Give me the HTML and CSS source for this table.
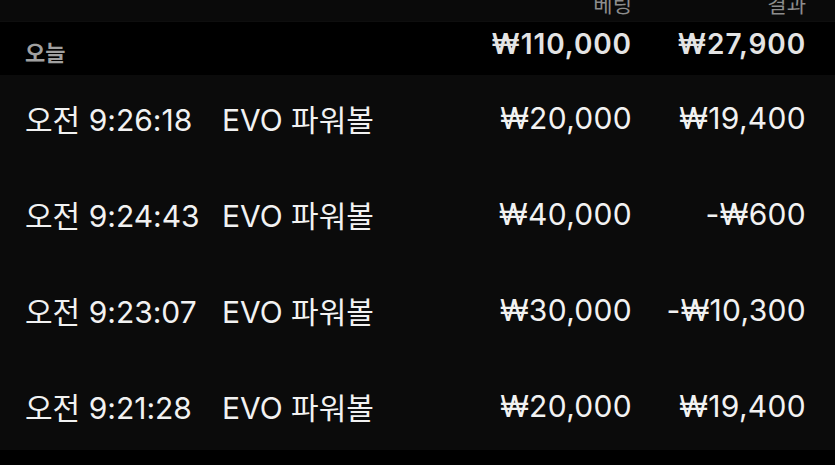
FILE: index.html
```html
<!DOCTYPE html>
<html lang="ko">
<head>
<meta charset="utf-8">
<link rel="stylesheet" href="styles.css">
</head>
<body>
<div class="table">
  <div class="row head">
    <div></div><div></div>
    <div class="num">베팅</div>
    <div class="num">결과</div>
  </div>
  <div class="row summary">
    <div class="label">오늘</div><div></div>
    <div class="num">₩110,000</div>
    <div class="num">₩27,900</div>
  </div>
  <div class="rows">
    <div class="row item">
      <div class="txt">오전 9:26:18</div><div class="txt">EVO 파워볼</div>
      <div class="num">₩20,000</div><div class="num">₩19,400</div>
    </div>
    <div class="row item">
      <div class="txt">오전 9:24:43</div><div class="txt">EVO 파워볼</div>
      <div class="num">₩40,000</div><div class="num">-₩600</div>
    </div>
    <div class="row item">
      <div class="txt">오전 9:23:07</div><div class="txt">EVO 파워볼</div>
      <div class="num">₩30,000</div><div class="num">-₩10,300</div>
    </div>
    <div class="row item">
      <div class="txt">오전 9:21:28</div><div class="txt">EVO 파워볼</div>
      <div class="num">₩20,000</div><div class="num">₩19,400</div>
    </div>
  </div>
</div>
</body>
</html>
```
FILE: styles.css
```css
html, body {
  margin: 0;
  padding: 0;
  background: #000;
  height: 100%;
}
body {
  font-family: Inter, "Noto Sans CJK KR", sans-serif;
  color: #f2f2f2;
}
.table {
  width: 835px;
}
.row {
  display: grid;
  grid-template-columns: 197px 1fr auto 174px;
  padding: 0 29px 0 25px;
  align-items: center;
}
.num {
  text-align: right;
}
.head {
  height: 22px;
  grid-template-rows: 22px;
  background: #0a0a0a;
  overflow: hidden;
  align-items: end;
  font-size: 21px;
  line-height: 24px;
  color: #8d8d8d;
  border-bottom: 1px solid #0e0e0e;
  box-sizing: border-box;
}
.head .num {
  margin-bottom: 5px;
}
.summary {
  height: 53px;
  background: #000;
}
.summary .label {
  font-size: 22px;
  color: #a0a0a0;
  font-weight: 600;
  padding-top: 4px;
}
.summary .num {
  font-size: 28px;
  font-weight: 600;
  letter-spacing: 0.9px;
  color: #e4e4e4;
  padding-bottom: 10px;
}
.rows {
  background: #0b0b0b;
  height: 375px;
  overflow: hidden;
  display: flex;
  flex-direction: column;
  justify-content: flex-end;
}
.item {
  flex: 0 0 96px;
  font-size: 30px;
  letter-spacing: 0.3px;
}
.item > div {
  padding-top: 8px;
}
.item .txt {
  letter-spacing: 0;
}
```
